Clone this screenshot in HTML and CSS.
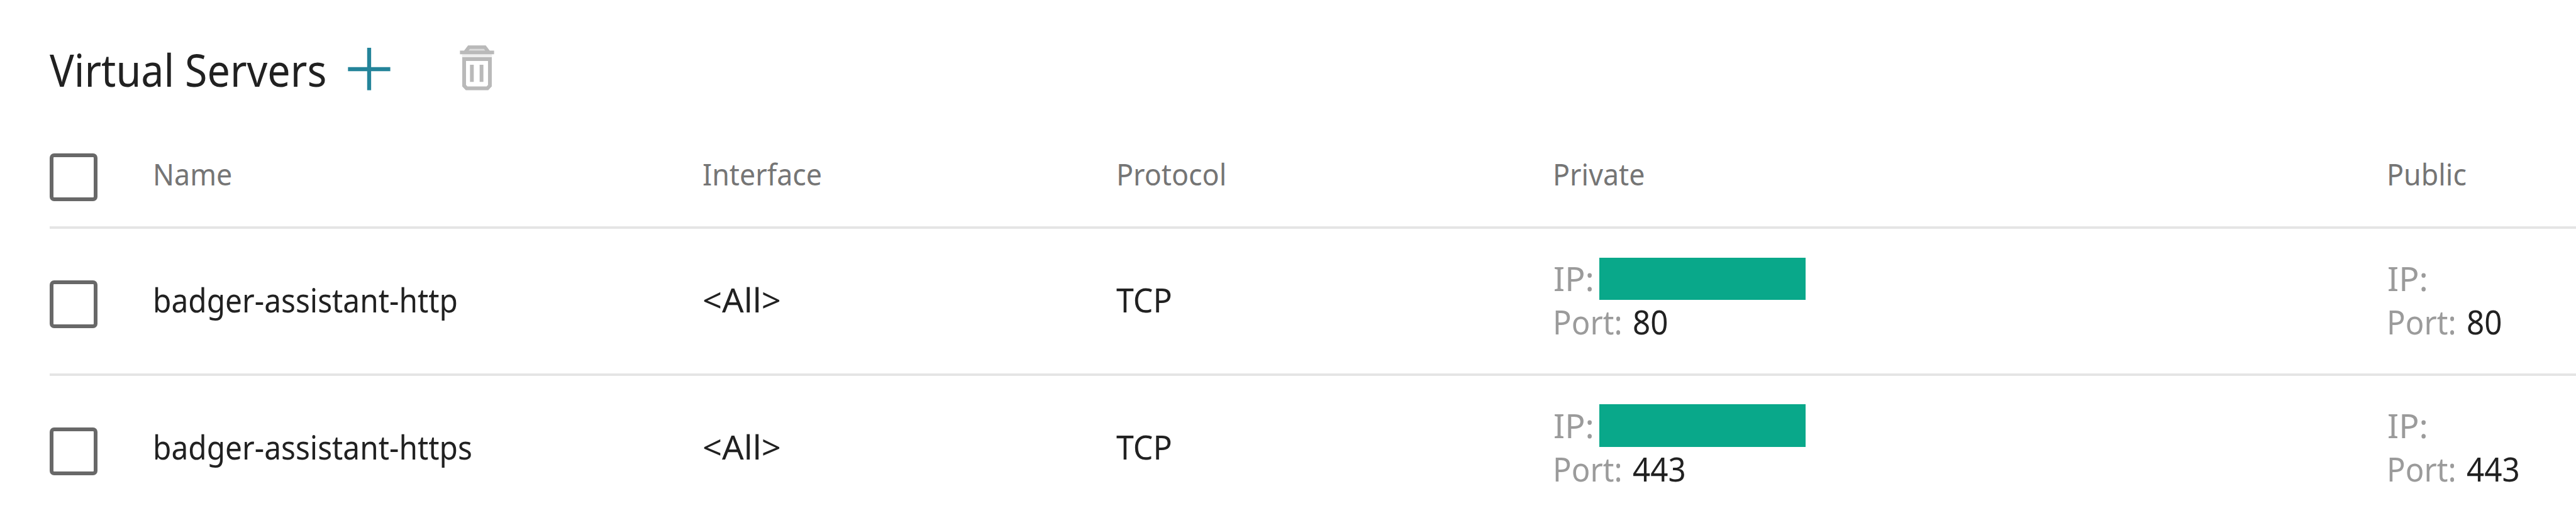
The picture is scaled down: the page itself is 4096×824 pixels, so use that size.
FILE: index.html
```
<!DOCTYPE html>
<html lang="en">
<head>
<meta charset="utf-8">
<title>Virtual Servers</title>
<link rel="stylesheet" href="styles.css">
</head>
<body>
<main class="panel">
  <header class="toolbar">
    <h1 class="title"><span class="title-text">Virtual Servers</span></h1>
    <svg class="icon-add" viewBox="35 42 215 215" aria-hidden="true">
      <path d="M42 150H244M143 48V251"/>
    </svg>
    <svg class="icon-delete" viewBox="570 34 175 230" aria-hidden="true">
      <path class="lid-fill" d="M606 71L620 47H696L711 71Z"/>
      <path class="lid-band" d="M587 78H730V97H587Z"/>
      <path class="lid" d="M577 71H740M602 70L620 46H696L714 70"/>
      <path class="can" d="M597 103H720V230L708 243H609L597 230Z"/>
      <path class="can" d="M634 130V212M680 130V212"/>
    </svg>
  </header>
  <section class="table">
    <div class="row head">
      <div><span class="checkbox"></span></div>
      <div><span class="text">Name</span></div>
      <div><span class="text">Interface</span></div>
      <div><span class="text shift">Protocol</span></div>
      <div><span class="text shift">Private</span></div>
      <div><span class="text shift">Public</span></div>
    </div>
    <div class="row">
      <div><span class="checkbox"></span></div>
      <div><span class="text">badger-assistant-http</span></div>
      <div><span class="text any">&lt;All&gt;</span></div>
      <div><span class="text proto">TCP</span></div>
      <div class="pair">
        <div class="line"><span class="key"><span class="ip">IP:</span></span><span class="mask"></span></div>
        <div class="line"><span class="key wide"><span class="port">Port:</span></span><span class="value">80</span></div>
      </div>
      <div class="pair">
        <div class="line"><span class="key"><span class="ip">IP:</span></span></div>
        <div class="line"><span class="key wide"><span class="port">Port:</span></span><span class="value">80</span></div>
      </div>
    </div>
    <div class="row last">
      <div><span class="checkbox"></span></div>
      <div><span class="text">badger-assistant-https</span></div>
      <div><span class="text any">&lt;All&gt;</span></div>
      <div><span class="text proto">TCP</span></div>
      <div class="pair">
        <div class="line"><span class="key"><span class="ip">IP:</span></span><span class="mask tall"></span></div>
        <div class="line"><span class="key wide"><span class="port">Port:</span></span><span class="value">443</span></div>
      </div>
      <div class="pair">
        <div class="line"><span class="key"><span class="ip">IP:</span></span></div>
        <div class="line"><span class="key wide"><span class="port">Port:</span></span><span class="value">443</span></div>
      </div>
    </div>
  </section>
</main>
</body>
</html>
```
FILE: styles.css
```
* { box-sizing: border-box; }
body {
  margin: 0;
  background: #fff;
  color: #212121;
  font-family: "Noto Sans", Tahoma, sans-serif;
  overflow: hidden;
}
.panel { height: 824px; padding-left: 79px; overflow: hidden; }

.toolbar { display: flex; align-items: center; height: 219px; }
.title { margin: 0; width: 472px; font-size: 72px; font-weight: 400; line-height: 100px; white-space: nowrap; }
.title-text { display: inline-block; transform: scaleX(0.897); transform-origin: 0 50%; }
.icon-add { width: 71.6px; height: 71.6px; flex: none; }
.icon-add path { fill: none; stroke: #007089; stroke-width: 19; stroke-opacity: 0.86; }
.icon-delete { width: 58.3px; height: 76.6px; margin-left: 106.5px; flex: none; }
.icon-delete path { fill: none; stroke: #b9b9b9; stroke-width: 18; }
.icon-delete .lid-fill { fill: #dcdcdc; stroke: none; }
.icon-delete .lid-band { fill: #eee; stroke: none; }
.icon-delete .lid { stroke-width: 17; }

.row {
  display: grid;
  grid-template-columns: 163.5px 874.5px 656px 694.5px 1326px 1fr;
  align-items: start;
  height: 233.7px;
  border-bottom: 4px solid #e5e5e5;
  font-size: 52.5px;
  line-height: 60px;
  white-space: nowrap;
}
.row.head { height: 145.2px; color: #757575; font-size: 48px; }
.row.last { height: 226px; border-bottom: 0; }

.checkbox {
  display: block;
  width: 76px;
  height: 76px;
  margin-top: 82px;
  border: 6px solid #686868;
  border-radius: 7px;
}
.head .checkbox { margin-top: 24.5px; }

.text { display: inline-block; margin-top: 83px; transform: scaleX(0.911); transform-origin: 0 50%; }
.head .text { margin-top: 28px; transform: scaleX(0.933); }
.text.any { transform: scaleX(1.035); }
.text.proto { margin-left: 2px; transform: scaleX(0.953); }
.text.shift { margin-left: 1.5px; }

.pair { padding-top: 44px; line-height: 69px; }
.line { display: flex; height: 69px; }
.key { width: 75.5px; flex: none; color: #9b9b9b; }
.key.wide { width: 128.5px; }
.ip, .port, .value { display: inline-block; transform-origin: 0 50%; }
.ip { margin-left: 2px; transform: scaleX(1.02); }
.port { margin-left: 1.5px; transform: scaleX(0.935); }
.value { transform: scaleX(0.94); }
.mask { width: 328px; height: 67px; margin-top: 2px; background: #09a88a; }
.mask.tall { height: 68px; margin-top: 1px; }
```
